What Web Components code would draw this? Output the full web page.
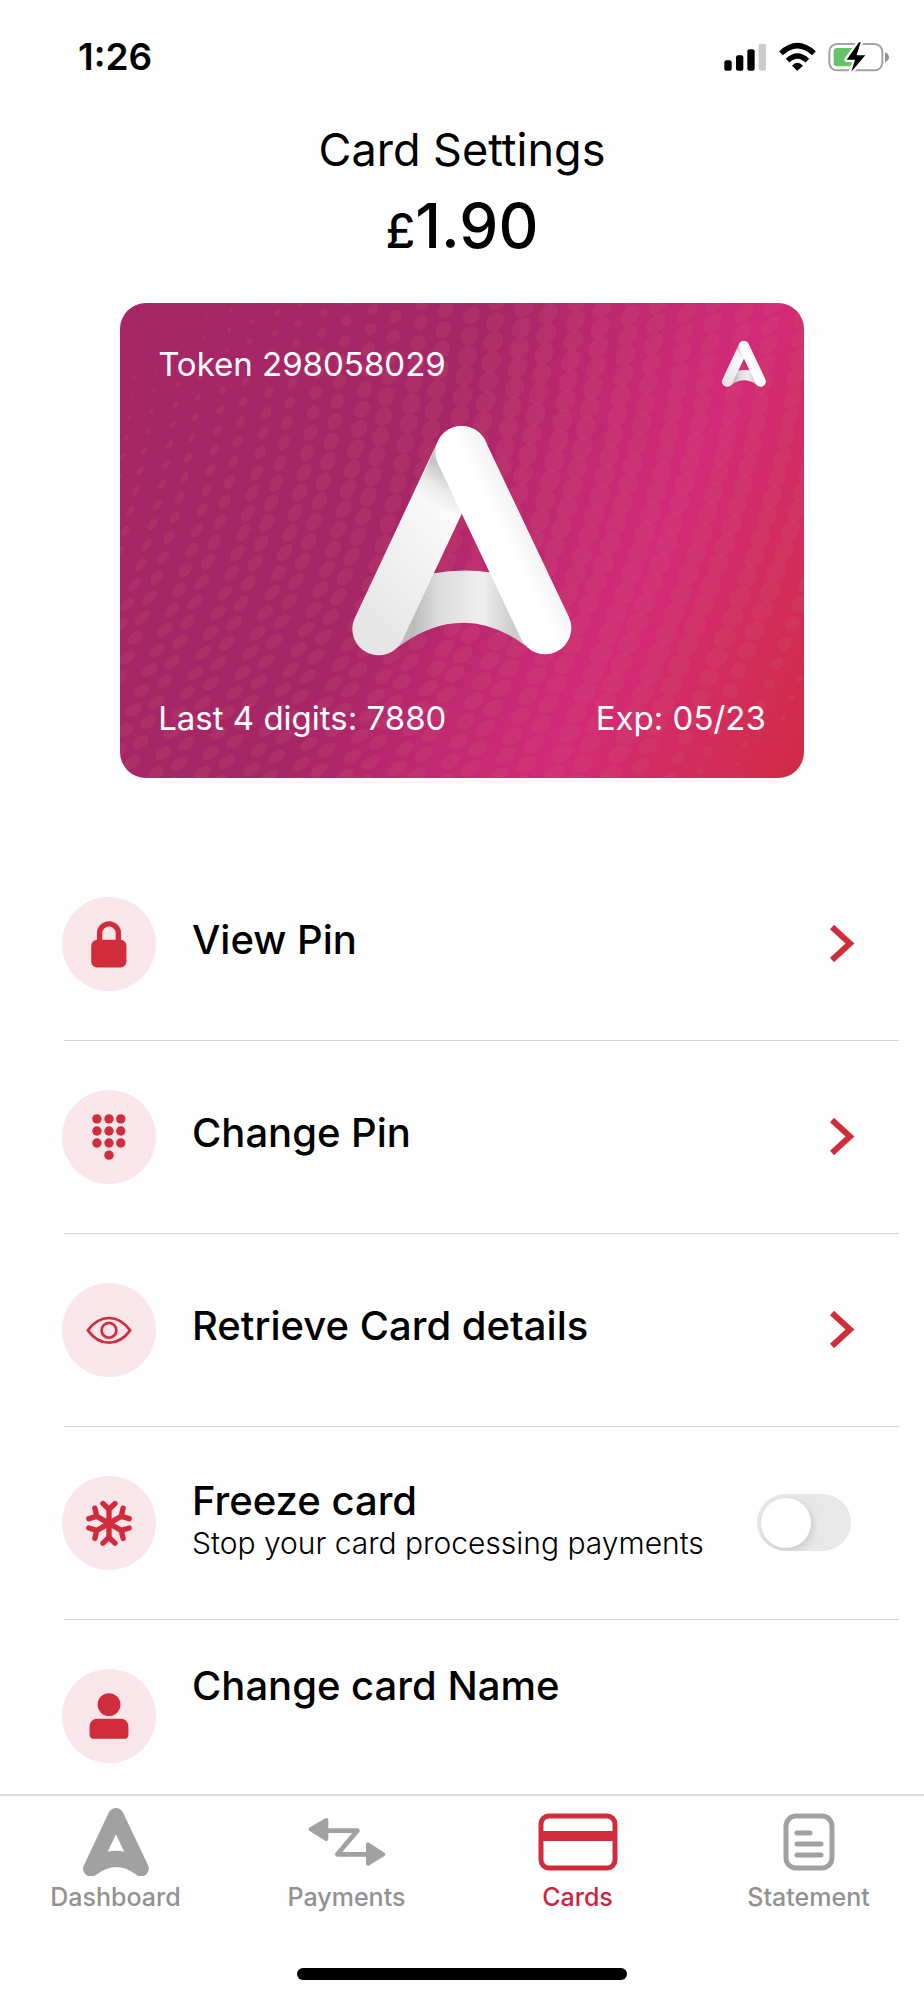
<!DOCTYPE html>
<html lang="en">
<head>
<meta charset="utf-8">
<meta name="viewport" content="width=device-width, initial-scale=1">
<title>Card Settings</title>
<style>
  html, body { margin: 0; height: 100%; background: #fefefe; }
  body { font-family: Inter, "Liberation Sans", sans-serif; color: #000; }
</style>
</head>
<body>
<card-settings-app></card-settings-app>

<script>
const define = (name, html, setup) => {
  const template = document.createElement('template');
  template.innerHTML = html;
  customElements.define(name, class extends HTMLElement {
    connectedCallback() {
      if (this.shadowRoot) return;
      const content = template.content.cloneNode(true);
      if (setup) setup(this, content);
      this.attachShadow({ mode: 'open' }).append(content);
    }
  });
};

/* Brand mark: folded ribbon, or a flat silhouette with the "flat" attribute */
define('brand-mark', `
<style>
  :host { display: block; }
  svg { display: block; width: 100%; height: auto; }
  .flat { display: none; }
  :host([flat]) .flat { display: block; }
  :host([flat]) .ribbon { display: none; }
</style>
<svg class="ribbon" viewBox="38 44 662 691" aria-hidden="true">
  <defs>
    <linearGradient id="bar" gradientUnits="userSpaceOnUse" x1="225" y1="600" x2="520" y2="600">
      <stop offset="0" stop-color="#bcbcbc"/><stop offset=".25" stop-color="#dcdcdc"/>
      <stop offset=".7" stop-color="#efefef"/><stop offset="1" stop-color="#cccccc"/>
    </linearGradient>
    <linearGradient id="left" gradientUnits="userSpaceOnUse" x1="60" y1="600" x2="370" y2="300">
      <stop offset="0" stop-color="#e6e6e6"/><stop offset="1" stop-color="#fcfcfc"/>
    </linearGradient>
    <linearGradient id="fold" gradientUnits="userSpaceOnUse" x1="322" y1="175" x2="262" y2="275">
      <stop offset="0" stop-color="#000" stop-opacity=".22"/><stop offset=".5" stop-color="#000" stop-opacity=".07"/><stop offset="1" stop-color="#000" stop-opacity="0"/>
    </linearGradient>
    <linearGradient id="right" gradientUnits="userSpaceOnUse" x1="440" y1="400" x2="580" y2="330">
      <stop offset=".4" stop-color="#fff"/><stop offset="1" stop-color="#f0f0f0"/>
    </linearGradient>
  </defs>
  <path fill="url(#bar)" d="M280 488Q368 472 456 485L560 705Q370 563 172 712Z"/>
  <path fill="none" stroke="url(#left)" stroke-width="158" stroke-linecap="round" d="M118 655 368 123"/>
  <path fill="url(#fold)" d="M296 89 439 157 368 310 222 262Z"/>
  <path fill="none" stroke="url(#right)" stroke-width="158" stroke-linecap="round" d="M368 123 619 652"/>
</svg>
<svg class="flat" viewBox="38 44 662 691" aria-hidden="true">
  <path fill="currentColor" d="M280 482Q368 466 456 482L560 705Q370 563 172 712Z"/>
  <path fill="none" stroke="currentColor" stroke-width="158" stroke-linecap="round" stroke-linejoin="round" d="M118 655 368 123 619 652"/>
</svg>`);

define('status-bar', `
<style>
  :host { display: flex; justify-content: space-between; align-items: center; height: 114px; padding: 0 34px 0 78px; flex: none; }
  time { font-size: 37px; font-weight: 600; line-height: 44px; }
  svg { display: block; width: 166px; height: 30px; }
</style>
<time>1:26</time>
<svg viewBox="102 65 498 90" role="img" aria-label="Signal, Wi-Fi, battery charging">
  <rect x="103" y="120" width="22" height="31" rx="6"/>
  <rect x="138" y="105" width="22" height="46" rx="6"/>
  <rect x="172" y="87" width="22" height="64" rx="6"/>
  <rect x="206" y="70" width="22" height="81" rx="6" fill="#cbcbcb"/>
  <g fill="none" stroke="#000" stroke-width="16">
    <path d="M273 99Q322 53 372 99"/>
    <path d="M293 121Q322 93 352 121"/>
  </g>
  <path d="M306 136Q322 119 339 136L322 151Z"/>
  <rect x="418" y="71" width="159" height="79" rx="23" fill="none" stroke="#a3a3a3" stroke-width="6"/>
  <path d="M585 96Q597 102 597 111T585 127Z" fill="#8e8e8e"/>
  <rect x="431" y="83" width="66" height="55" rx="10" fill="#64c466"/>
  <path d="M507 66 470 118H495L484 154 526 105H500L512 66Z" fill="#000" stroke="#fefefe" stroke-width="14" stroke-linejoin="round" paint-order="stroke"/>
</svg>`);

define('balance-header', `
<style>
  :host { display: block; flex: none; text-align: center; padding: 8px 24px 41px; }
  h1 { margin: 0 0 12px; font-size: 45px; line-height: 56px; font-weight: 400; }
  p { margin: 0; font-size: 62px; line-height: 72px; font-weight: 500; }
  small { font-size: 48px; line-height: 48px; }
</style>
<h1><slot></slot></h1>
<p><small>£</small>1.90</p>`);

define('payment-card', `
<style>
  :host { display: grid; box-sizing: border-box; width: 74%; aspect-ratio: 683 / 474; margin: 0 auto; flex: none;
    border-radius: 26px; overflow: hidden; color: #fff; font-size: 33px; line-height: 40px;
    background: linear-gradient(115deg, #a62666 0%, #a72667 42%, #be2870 56%, #d32a79 72%, #d22c58 89%, #cf2b45 99%); }
  .pattern, .content { grid-area: 1 / 1; min-width: 0; min-height: 0; }
  .pattern { width: 100%; height: 100%; }
  .content { display: flex; flex-direction: column; justify-content: space-between; align-items: center; padding: 38px 38px 37px; }
  .line { display: flex; justify-content: space-between; align-items: center; width: 100%; height: 46px; }
  .small { width: 44px; }
  .large { width: 220px; }
</style>
<svg class="pattern" viewBox="0 0 683 474" preserveAspectRatio="xMidYMid slice" aria-hidden="true"></svg>
<div class="content">
  <div class="line"><span><slot name="token"></slot></span><brand-mark class="small"></brand-mark></div>
  <brand-mark class="large"></brand-mark>
  <div class="line"><span><slot name="digits"></slot></span><span><slot name="expiry"></slot></span></div>
</div>`, (host, root) => {
  /* Halftone field: a leaning lattice whose dots grow towards the right and vanish in two corners */
  const svg = root.querySelector('.pattern');
  const clamp = v => Math.min(1, Math.max(0, v));
  for (let c = -4; c < 40; c++) for (let r = -6; r < 40; r++) {
    const x = c * 21 + c * c * .16 - r * 5 + 18 * Math.sin(r / 6);
    const y = r * 20 + 20 * Math.sin(c / 5) + (c & 1) * 10;
    if (x < -20 || x > 700 || y < -20 || y > 494) continue;
    const topLeft = clamp((x + y * 1.3 - 40) / 380);
    const corner = clamp((683 - x + 474 - y - 40) / 170);
    const s = Math.min(topLeft, corner) * (9 + 3 * clamp(x / 500));
    if (s < .8) continue;
    const e = document.createElementNS('http://www.w3.org/2000/svg', 'ellipse');
    e.setAttribute('rx', s.toFixed(1));
    e.setAttribute('ry', (s * (.68 + .14 * Math.sin((x - y) / 150))).toFixed(1));
    e.setAttribute('fill', '#cf5a70');
    e.setAttribute('opacity', '.2');
    e.setAttribute('transform', `translate(${x.toFixed(1)} ${y.toFixed(1)}) rotate(${(-46 - 12 * Math.sin(y / 90)).toFixed(0)})`);
    svg.append(e);
  }
});

const glyphs = {
  lock: '<rect x="87" y="127" width="105" height="83" rx="18"/><path fill="none" stroke="currentColor" stroke-width="16" d="M112 135V108a28 28 0 0 1 56 0V135"/>',
  keypad: [86, 122, 158].map(y => [104, 140, 175].map(x => `<circle cx="${x}" cy="${y}" r="14"/>`).join('')).join('') + '<circle cx="140" cy="194" r="14"/>',
  eye: '<g fill="none" stroke="currentColor" stroke-width="8" stroke-linejoin="round"><path d="M77 141C113 92 167 92 203 141C167 190 113 190 77 141Z"/><circle cx="140" cy="141" r="22"/></g>',
  snow: '<g fill="none" stroke="currentColor" stroke-width="16" stroke-linecap="round">' + [0, 60, 120, 180, 240, 300].map(a => `<path transform="rotate(${a} 140 141)" d="M140 141V98M122 82 140 99 158 82"/>`).join('') + '</g>',
  person: '<circle cx="140" cy="106" r="34"/><path d="M106 148H174Q198 148 198 174V194Q198 208 184 208H96Q82 208 82 194V174Q82 148 106 148Z"/>'
};

define('round-icon', `
<style>
  :host { display: block; width: 94px; height: 94px; flex: none; border-radius: 50%; background: #f8e6ea; color: #d12c3c; }
  svg { display: block; width: 100%; height: 100%; }
</style>
<svg viewBox="0 0 280 280" fill="currentColor" aria-hidden="true"></svg>`, (host, root) => {
  root.querySelector('svg').innerHTML = glyphs[host.getAttribute('name')];
});

const rowStyle = `
  :host { display: block; border-bottom: 1px solid #d5d5d7; margin-left: 64px; }
  .row { display: flex; align-items: center; gap: 36px; box-sizing: border-box; width: 100%; height: 192px;
    border: 0; margin: 0; padding: 0 44px 0 0; background: none; color: inherit; font: inherit; text-align: left; cursor: pointer; }
  round-icon { margin-left: -2px; }
  .text { flex: 1; min-width: 0; padding-bottom: 8px; font-size: 40px; line-height: 44px; font-weight: 500; }`;

define('action-row', `
<style>${rowStyle}
  :host([raised]) { border-bottom: 0; }
  :host([raised]) .text { padding-bottom: 60px; }
  :host([raised]) .chevron { display: none; }
  .chevron { display: block; width: 25px; height: 37px; flex: none; }
</style>
<button class="row" type="button">
  <round-icon></round-icon>
  <span class="text"><slot></slot></span>
  <svg class="chevron" viewBox="0 0 25 37" aria-hidden="true"><path d="M2 2 20 18.500 2 35" fill="none" stroke="#d12c3c" stroke-width="6"/></svg>
</button>`, (host, root) => root.querySelector('round-icon').setAttribute('name', host.getAttribute('icon')));

define('toggle-row', `
<style>${rowStyle}
  .row { padding-right: 48px; }
  .text { padding-bottom: 4px; }
  .note { display: block; font-size: 30px; line-height: 40px; font-weight: 300; white-space: nowrap; }
  input { appearance: none; flex: none; display: flex; align-items: center; box-sizing: border-box; width: 94px; height: 57px;
    margin: 0; padding: 0 4px; border-radius: 29px; background: #e8e8e8; overflow: hidden; cursor: pointer; }
  input::before { content: ""; width: 50px; height: 50px; border-radius: 50%; background: #fff; box-shadow: 2px 3px 8px #0002; }
  input:checked { justify-content: flex-end; background: #d12c3c; }
</style>
<label class="row">
  <round-icon></round-icon>
  <span class="text"><slot></slot><span class="note"><slot name="note"></slot></span></span>
  <input type="checkbox" role="switch">
</label>`, (host, root) => root.querySelector('round-icon').setAttribute('name', host.getAttribute('icon')));

define('tab-link', `
<style>
  :host { display: block; flex: 1; min-width: 0; color: #929292; }
  :host([active]) { color: #d12340; }
  a { display: flex; flex-direction: column; align-items: center; gap: 6px; color: inherit; text-decoration: none;
    font-size: 25px; line-height: 30px; font-weight: 500; }
  .icon { display: flex; align-items: center; justify-content: center; height: 68px; color: #a1a1a1; }
  :host([active]) .icon { color: #d12c3c; }
</style>
<a href="#"><span class="icon"><slot name="icon"></slot></span><span><slot></slot></span></a>`);

define('tab-bar', `
<style>
  :host { display: block; flex: none; border-top: 2px solid #dcdcdc; padding: 12px 0 20px; background: #fefefe; }
  nav { display: flex; }
  brand-mark { width: 66px; }
  svg { display: block; }
  .home { width: 36%; max-width: 330px; height: 12px; margin: 56px auto 0; border-radius: 6px; background: #000; }
</style>
<nav aria-label="Main">
  <tab-link><brand-mark slot="icon" flat></brand-mark>Dashboard</tab-link>
  <tab-link><svg slot="icon" width="78" height="50" viewBox="924 111 234 150" fill="none" stroke="currentColor" stroke-linejoin="round" stroke-linecap="round" aria-hidden="true">
    <path stroke-width="14" d="M980 152H1072L1012 223H1102"/>
    <path stroke-width="12" fill="currentColor" d="M932 148 979 120V177ZM1104 193 1150 223 1104 251Z"/>
  </svg>Payments</tab-link>
  <tab-link active><svg slot="icon" width="80" height="58" viewBox="0 0 80 58" fill="none" stroke="currentColor" aria-hidden="true">
    <rect x="3" y="3" width="74" height="52" rx="8" stroke-width="5"/><path d="M3 23H77" stroke-width="10"/>
  </svg>Cards</tab-link>
  <tab-link><svg slot="icon" width="52" height="58" viewBox="0 0 52 58" fill="none" stroke="currentColor" stroke-width="5" stroke-linecap="round" aria-hidden="true">
    <rect x="3" y="3" width="46" height="52" rx="10"/><path d="M14 20H27M14 31H38M14 42H38"/>
  </svg>Statement</tab-link>
</nav>
<div class="home"></div>`);

define('card-settings-app', `
<style>
  :host { display: flex; flex-direction: column; height: 100vh; }
  main { flex: 1; min-height: 0; overflow-y: auto; scrollbar-width: none; display: flex; flex-direction: column; }
  .list { flex: none; margin-top: 70px; padding-right: 25px; }
</style>
<status-bar></status-bar>
<main>
  <balance-header>Card Settings</balance-header>
  <payment-card>
    <span slot="token">Token 298058029</span>
    <span slot="digits">Last 4 digits: 7880</span>
    <span slot="expiry">Exp: 05/23</span>
  </payment-card>
  <div class="list">
    <action-row icon="lock">View Pin</action-row>
    <action-row icon="keypad">Change Pin</action-row>
    <action-row icon="eye">Retrieve Card details</action-row>
    <toggle-row icon="snow">Freeze card<span slot="note">Stop your card processing payments</span></toggle-row>
    <action-row icon="person" raised>Change card Name</action-row>
  </div>
</main>
<tab-bar></tab-bar>`);
</script>
</body>
</html>
